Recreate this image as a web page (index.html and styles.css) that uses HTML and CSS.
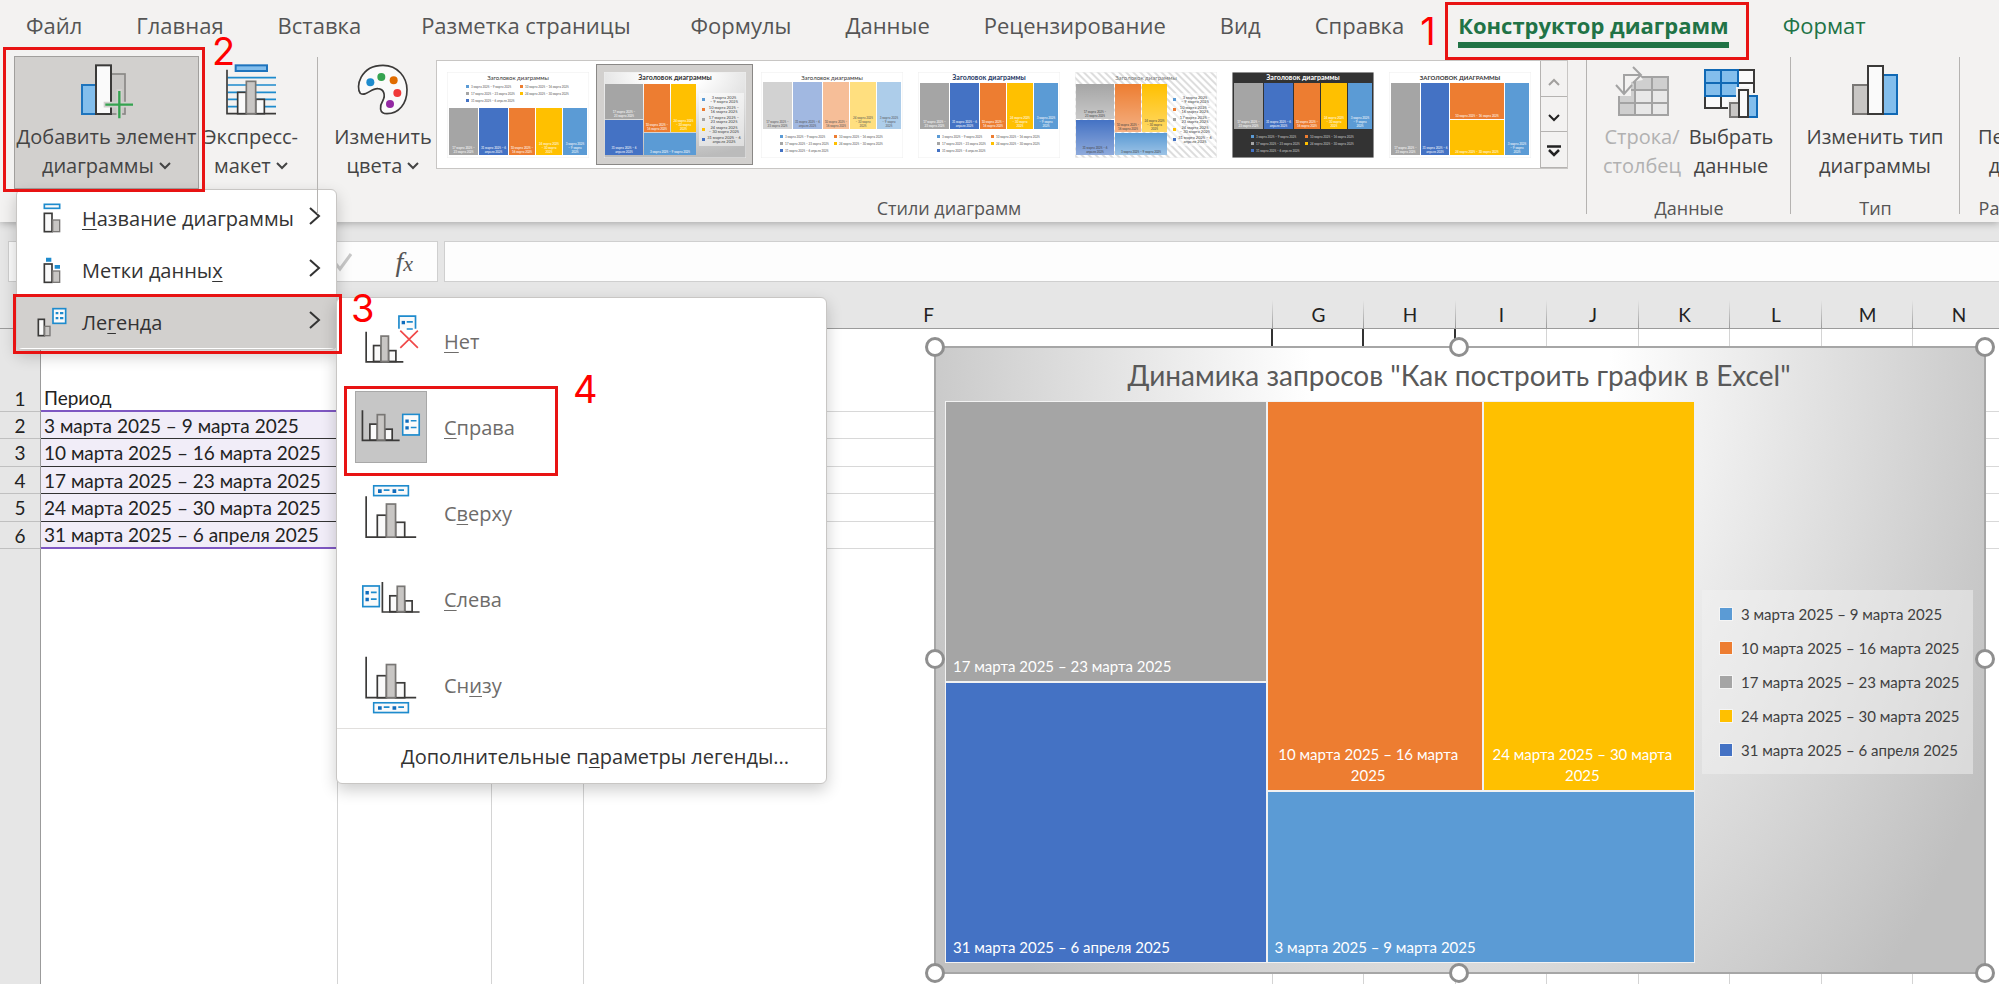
FILE: index.html
```html
<!DOCTYPE html>
<html lang="ru">
<head>
	<meta charset="utf-8">
	<title>Excel</title>
	<link rel="stylesheet" href="styles.css">
</head>
<body>
<svg class="defs">
	<symbol id="small-chart" viewBox="0 0 118 96" overflow="visible">
		<path d="M4 2V91H114" fill="none" stroke="#3b3a39" stroke-width="5"/>
		<rect x="26" y="43" width="22" height="47" fill="#fafafa" stroke="#3b3a39" stroke-width="5"/>
		<rect x="70" y="58" width="22" height="32" fill="#fafafa" stroke="#3b3a39" stroke-width="5"/>
		<rect x="48" y="15" width="22" height="75" fill="#c8c6c4" stroke="#797775" stroke-width="5"/>
	</symbol>
	<symbol id="big-chart" viewBox="0 0 156 128" overflow="visible">
		<path d="M4 2V123H152" fill="none" stroke="#3b3a39" stroke-width="5"/>
		<rect x="37" y="58" width="27" height="65" fill="#fafafa" stroke="#3b3a39" stroke-width="5"/>
		<rect x="91" y="79" width="27" height="44" fill="#fafafa" stroke="#3b3a39" stroke-width="5"/>
		<rect x="64" y="25" width="27" height="98" fill="#c8c6c4" stroke="#797775" stroke-width="5"/>
	</symbol>
	<symbol id="side-legend" viewBox="0 0 56 68">
		<rect x="3" y="3" width="49" height="61" fill="#fafafa" stroke="#1e8bcd" stroke-width="5"/>
		<path d="M11 18h10v10H11zM11 38h10v10H11z" fill="#0f6cbd"/>
		<path d="M27 22h17M27 42h17" stroke="#1e8bcd" stroke-width="5"/>
	</symbol>
	<symbol id="flat-legend" viewBox="0 0 110 36">
		<rect x="3" y="3" width="103" height="29" fill="#fafafa" stroke="#1e8bcd" stroke-width="5"/>
		<path d="M16 13h11v11H16zM59 13h11v11H59z" fill="#0f6cbd"/>
		<path d="M33 16h17M76 16h17" stroke="#1e8bcd" stroke-width="5"/>
	</symbol>
	<symbol id="chevron" viewBox="0 0 12 8">
		<path d="M1 1L6 6L11 1" fill="none" stroke="currentColor" stroke-width="2"/>
	</symbol>
	<symbol id="arrow" viewBox="0 0 12 20">
		<path d="M1 2L10 10L1 18" fill="none" stroke="currentColor" stroke-width="2"/>
	</symbol>
</svg>

<header class="ribbon">
	<nav class="tabs">
		<button class="tab">Файл</button>
		<button class="tab">Главная</button>
		<button class="tab">Вставка</button>
		<button class="tab wide">Разметка страницы</button>
		<button class="tab">Формулы</button>
		<button class="tab">Данные</button>
		<button class="tab">Рецензирование</button>
		<button class="tab">Вид</button>
		<button class="tab">Справка</button>
		<button class="tab active">Конструктор диаграмм<span class="mark mark1"></span><span class="num num1">1</span></button>
		<button class="tab green">Формат</button>
	</nav>

	<div class="groups">
		<section class="group group-layout">
			<div class="tools">
				<div class="holder">
					<button class="tool tool-add">
						<svg width="52" height="56" viewBox="248 188 156 168">
							<rect x="338" y="221" width="42" height="120" fill="#c8c6c4" stroke="#8a8886" stroke-width="5"/>
							<rect x="251" y="254" width="42" height="87" fill="#83beec" stroke="#1e74bd" stroke-width="6"/>
							<rect x="293" y="195" width="45" height="146" fill="#fafafa" stroke="#3b3a39" stroke-width="6"/>
							<path d="M363 266V356M316 313H404" stroke="#d2d0ce" stroke-width="17"/>
							<path d="M363 272V354M321 313H404" stroke="#35a350" stroke-width="7"/>
						</svg>
						<span>Добавить элемент<br>диаграммы <svg class="chev" width="12" height="8"><use href="#chevron"/></svg></span>
					</button>
					<span class="mark mark2"></span><span class="num num2">2</span>
					<div class="menu menu-main">
						<button class="item">
							<svg width="30" height="30" viewBox="110 62 90 90">
								<rect x="132" y="66" width="46" height="12" fill="#fafafa" stroke="#1e8bcd" stroke-width="5"/>
								<rect x="132" y="93" width="23" height="55" fill="#fafafa" stroke="#3b3a39" stroke-width="5"/>
								<rect x="157" y="113" width="21" height="35" fill="#c8c6c4" stroke="#797775" stroke-width="4"/>
							</svg>
							<span><u>Н</u>азвание диаграммы</span>
							<svg class="arr" width="12" height="20"><use href="#arrow"/></svg>
						</button>
						<button class="item">
							<svg width="30" height="30" viewBox="110 218 90 90">
								<path d="M137 226h16v12h-16zM163 248h16v11h-16z" fill="#1e8bcd"/>
								<rect x="132" y="245" width="23" height="55" fill="#fafafa" stroke="#3b3a39" stroke-width="5"/>
								<rect x="157" y="266" width="21" height="34" fill="#c8c6c4" stroke="#797775" stroke-width="4"/>
							</svg>
							<span>Метки данны<u>х</u></span>
							<svg class="arr" width="12" height="20"><use href="#arrow"/></svg>
						</button>
						<button class="item current">
							<svg width="30" height="30" viewBox="112 376 90 90">
								<rect x="160" y="381" width="38" height="44" fill="#fafafa" stroke="#1e8bcd" stroke-width="5"/>
								<path d="M168 391h8v7h-8zM168 406h8v7h-8zM181 391h10v7h-10zM181 406h10v7h-10z" fill="#1e8bcd"/>
								<rect x="116" y="413" width="18" height="49" fill="#fafafa" stroke="#3b3a39" stroke-width="5"/>
								<rect x="135" y="434" width="16" height="28" fill="#c8c6c4" stroke="#797775" stroke-width="4"/>
							</svg>
							<span>Ле<u>г</u>енда</span>
							<svg class="arr" width="12" height="20"><use href="#arrow"/></svg>
						</button>
						<span class="mark mark3"></span><span class="num num3">3</span>

						<div class="menu menu-sub">
							<button class="choice">
								<svg class="pic" viewBox="76 46 213 213">
									<use href="#small-chart" x="105" y="123" width="118" height="96"/>
									<path d="M206 116V79H255V116" fill="#fafafa" stroke="#1e8bcd" stroke-width="5"/>
									<path d="M214 93h10v10h-10z" fill="#0f6cbd"/>
									<path d="M229 96h18M229 117h18" stroke="#1e8bcd" stroke-width="5"/>
									<path d="M210 122L262 173M262 122L210 173" stroke="#f04848" stroke-width="5"/>
								</svg>
								<span><u>Н</u>ет</span>
							</button>
							<button class="choice">
								<svg class="pic chosen" viewBox="76 304 213 213">
									<use href="#small-chart" x="94" y="359" width="118" height="96"/>
									<use href="#side-legend" x="214" y="370" width="56" height="68"/>
								</svg>
								<span><u>С</u>права</span>
								<span class="mark mark4"></span><span class="num num4">4</span>
							</button>
							<button class="choice">
								<svg class="pic" viewBox="76 562 213 213">
									<use href="#big-chart" x="105" y="617" width="156" height="128"/>
									<use href="#flat-legend" x="128" y="585" width="110" height="36"/>
								</svg>
								<span>С<u>в</u>ерху</span>
							</button>
							<button class="choice">
								<svg class="pic" viewBox="76 820 213 213">
									<use href="#small-chart" x="153" y="874" width="118" height="96"/>
									<use href="#side-legend" x="96" y="885" width="56" height="68"/>
								</svg>
								<span><u>С</u>лева</span>
							</button>
							<button class="choice">
								<svg class="pic" viewBox="76 1078 213 213">
									<use href="#big-chart" x="105" y="1099" width="156" height="128"/>
									<use href="#flat-legend" x="128" y="1234" width="110" height="36"/>
								</svg>
								<span>Сн<u>и</u>зу</span>
							</button>
							<button class="more">Дополнительные п<u>а</u>раметры легенды...</button>
						</div>
					</div>
				</div>
				<button class="tool tool-express">
					<svg width="52" height="56" viewBox="676 188 156 168">
						<rect x="708" y="195" width="94" height="17" fill="#83beec" stroke="#1e74bd" stroke-width="6"/>
						<path d="M684 232H829M684 254H829M684 276H829M684 297H829M684 319H829" stroke="#1e8bcd" stroke-width="5"/>
						<path d="M682 208V340H829" fill="none" stroke="#3b3a39" stroke-width="5"/>
						<rect x="714" y="276" width="26" height="64" fill="#fafafa" stroke="#3b3a39" stroke-width="5"/>
						<rect x="768" y="297" width="26" height="43" fill="#fafafa" stroke="#3b3a39" stroke-width="5"/>
						<rect x="740" y="243" width="28" height="97" fill="#c8c6c4" stroke="#797775" stroke-width="5"/>
					</svg>
					<span>Экспресс-<br>макет <svg class="chev" width="12" height="8"><use href="#chevron"/></svg></span>
				</button>
			</div>
		</section>

		<section class="group group-styles">
			<div class="tools">
				<button class="tool tool-colors">
					<svg width="52" height="56" viewBox="1073 188 156 168">
						<path d="M1083 279C1068 262 1082 195 1151 195C1196 195 1223 232 1223 268C1223 310 1198 340 1163 340C1138 340 1141 316 1150 302C1160 283 1153 266 1136 265C1115 263 1100 290 1083 279Z" fill="#fafafa" stroke="#3b3a39" stroke-width="5"/>
						<circle cx="1113" cy="246" r="12" fill="#1e8bcd"/>
						<circle cx="1146" cy="230" r="12" fill="#35a350"/>
						<circle cx="1183" cy="240" r="12" fill="#e06c00"/>
						<circle cx="1194" cy="278" r="12" fill="#f03a3a"/>
						<circle cx="1172" cy="311" r="12" fill="#9329a3"/>
					</svg>
					<span>Изменить<br>цвета <svg class="chev" width="12" height="8"><use href="#chevron"/></svg></span>
				</button>
				<div class="gallery">
					<div class="thumbs" id="thumbs"></div>
					<div class="scroll">
						<button class="dim" aria-label="Вверх"><svg width="12" height="8" viewBox="0 0 12 8"><path d="M1 7L6 2L11 7" fill="none" stroke="currentColor" stroke-width="2"/></svg></button>
						<button aria-label="Вниз"><svg width="12" height="8"><use href="#chevron"/></svg></button>
						<button aria-label="Ещё"><svg width="14" height="12" viewBox="0 0 14 12"><path d="M0 1.5H14M2 5L7 10L12 5" fill="none" stroke="currentColor" stroke-width="2.5"/></svg></button>
					</div>
				</div>
			</div>
			<div class="caption">Стили диаграмм</div>
		</section>

		<section class="group group-data">
			<div class="tools">
				<button class="tool tool-row" disabled>
					<svg width="54" height="56" viewBox="0 -5 54 56">
						<rect x="4" y="9" width="49" height="38" fill="#e8e8e8"/>
						<path d="M4 9H53V22H20V47H4Z" fill="#cfcfcf"/>
						<path d="M4 9H53V47H4ZM20 9V47M37 9V47M4 22H53M4 35H53" fill="none" stroke="#a3a3a3" stroke-width="2"/>
						<path d="M0 6H24L28 12L16 14V28H0Z" fill="#f3f2f1"/>
						<path d="M9 25V7H26M18 -1L26 7L18 15M1 17L9 26L17 17" fill="none" stroke="#a3a3a3" stroke-width="2"/>
					</svg>
					<span>Строка/<br>столбец</span>
				</button>
				<button class="tool tool-select">
					<svg width="54" height="56" viewBox="0 -6 54 56">
						<rect x="1" y="1" width="49" height="38" fill="#fafafa"/>
						<rect x="1" y="1" width="33" height="26" fill="#83beec"/>
						<path d="M34 1H50V39H1V27M34 27H50M34 14H50M17 27V39" fill="none" stroke="#3b3a39" stroke-width="2"/>
						<path d="M1 1H34V27H1ZM17 1V27M1 14H34" fill="none" stroke="#1069b5" stroke-width="2"/>
						<path d="M24 31H32V18H46V24H54V50H24Z" fill="#f3f2f1"/>
						<rect x="26" y="34" width="9" height="14" fill="#c8c6c4" stroke="#797775" stroke-width="2"/>
						<rect x="44" y="27" width="9" height="21" fill="#83beec" stroke="#1069b5" stroke-width="2"/>
						<rect x="35" y="21" width="9" height="27" fill="#fafafa" stroke="#3b3a39" stroke-width="2"/>
					</svg>
					<span>Выбрать<br>данные</span>
				</button>
			</div>
			<div class="caption">Данные</div>
		</section>

		<section class="group group-type">
			<div class="tools">
				<button class="tool tool-type">
					<svg width="48" height="56" viewBox="-1 -2 48 56">
						<rect x="1" y="20" width="15" height="29" fill="#c8c6c4" stroke="#797775" stroke-width="2"/>
						<rect x="31" y="10" width="14" height="39" fill="#83beec" stroke="#1069b5" stroke-width="2"/>
						<rect x="16" y="1" width="15" height="48" fill="#fafafa" stroke="#3b3a39" stroke-width="2"/>
					</svg>
					<span>Изменить тип<br>диаграммы</span>
				</button>
			</div>
			<div class="caption">Тип</div>
		</section>

		<section class="group group-place">
			<div class="tools">
				<button class="tool tool-move">
					<svg width="48" height="56"></svg>
					<span>Переместить<br>диаграмму</span>
				</button>
			</div>
			<div class="caption">Расположение</div>
		</section>
	</div>
</header>

<div class="formula">
	<div class="fx-box">
		<svg width="18" height="22" viewBox="0 0 18 22"><path d="M1 13L5 18L16 3" fill="none" stroke="#c8c8c8" stroke-width="3"/></svg>
		<i>f<small>x</small></i>
	</div>
	<input class="fx-input" type="text" aria-label="Строка формул">
</div>

<main class="sheet">
	<table class="cells">
		<colgroup>
			<col class="c-num"><col class="c-a"><col class="c-b"><col class="c-c"><col class="c-f">
			<col class="c-n"><col class="c-n"><col class="c-n"><col class="c-n"><col class="c-n"><col class="c-n"><col class="c-n"><col class="c-n">
		</colgroup>
		<thead>
			<tr><th></th><th></th><th></th><th></th><th>F</th><th>G</th><th>H</th><th>I</th><th>J</th><th>K</th><th>L</th><th>M</th><th>N</th></tr>
		</thead>
		<tbody>
			<tr class="first"><th>1</th><td>Период</td><td></td><td></td><td class="dark"></td><td class="dark"></td><td class="dark"></td><td></td><td></td><td></td><td></td><td></td><td></td></tr>
			<tr class="sel"><th>2</th><td>3 марта 2025 – 9 марта 2025</td><td colspan="11"></td></tr>
			<tr class="sel"><th>3</th><td>10 марта 2025 – 16 марта 2025</td><td colspan="11"></td></tr>
			<tr class="sel"><th>4</th><td>17 марта 2025 – 23 марта 2025</td><td colspan="11"></td></tr>
			<tr class="sel"><th>5</th><td>24 марта 2025 – 30 марта 2025</td><td colspan="11"></td></tr>
			<tr class="sel end"><th>6</th><td>31 марта 2025 – 6 апреля 2025</td><td colspan="11"></td></tr>
			<tr class="rest"><th></th><td></td><td></td><td></td><td></td><td></td><td></td><td></td><td></td><td></td><td></td><td></td><td></td></tr>
		</tbody>
	</table>

	<div class="chart">
		<h2 class="chart-title">Динамика запросов "Как построить график в Excel"</h2>
		<div class="chart-body">
			<div class="treemap">
				<div class="tm-left">
					<div class="tile gray"><span>17 марта 2025 – 23 марта 2025</span></div>
					<div class="tile blue"><span>31 марта 2025 – 6 апреля 2025</span></div>
				</div>
				<div class="tm-right">
					<div class="tm-top">
						<div class="tile orange"><span>10 марта 2025 – 16 марта 2025</span></div>
						<div class="tile yellow"><span>24 марта 2025 – 30 марта 2025</span></div>
					</div>
					<div class="tile sky"><span>3 марта 2025 – 9 марта 2025</span></div>
				</div>
			</div>
			<ul class="legend">
				<li><i class="sky"></i>3 марта 2025 – 9 марта 2025</li>
				<li><i class="orange"></i>10 марта 2025 – 16 марта 2025</li>
				<li><i class="gray"></i>17 марта 2025 – 23 марта 2025</li>
				<li><i class="yellow"></i>24 марта 2025 – 30 марта 2025</li>
				<li><i class="blue"></i>31 марта 2025 – 6 апреля 2025</li>
			</ul>
		</div>
		<span class="dot tl"></span><span class="dot tc"></span><span class="dot tr"></span>
		<span class="dot ml"></span><span class="dot mr"></span>
		<span class="dot bl"></span><span class="dot bc"></span><span class="dot br"></span>
	</div>
</main>
<script src="thumbs.js"></script>
</body>
</html>
```

FILE: styles.css
```css
*{
	margin:0;
	padding:0;
	box-sizing:border-box;
}
body{
	height:100vh;
	display:flex;
	flex-direction:column;
	overflow:hidden;
	background:#e6e6e6;
	color:#444;
	font-family:"Open Sans","Noto Sans",sans-serif;
	font-size:20px;
}
button{
	font:inherit;
	color:inherit;
	background:none;
	border:0;
	cursor:pointer;
}
u{
	text-underline-offset:3px;
	text-decoration-thickness:1px;
}
.defs{
	position:absolute;
	width:0;
	height:0;
}

/* ribbon */
.ribbon{
	position:relative;
	z-index:5;
	background:#f3f2f1;
	box-shadow:0 1px 8px rgba(0,0,0,0.3);
}
.tabs{
	display:flex;
	gap:54px;
	height:56px;
	padding-left:26px;
	align-items:flex-start;
}
.tab{
	position:relative;
	height:48px;
	padding-top:8px;
	border-bottom:6px solid transparent;
	font-size:22px;
	line-height:34px;
	white-space:nowrap;
	color:#555;
}
.tab.wide{
	padding-left:6px;
	padding-right:6px;
}
.tab.active{
	color:#217346;
	border-color:#217346;
	font-weight:bold;
}
.tab.green{
	color:#217346;
}
.groups{
	display:flex;
	height:166px;
}
.group{
	position:relative;
	flex:none;
	display:flex;
	flex-direction:column;
	justify-content:space-between;
}
.group:not(:last-child)::after{
	content:"";
	position:absolute;
	right:0;
	top:1px;
	bottom:8px;
	width:1px;
	background:#b5b3b1;
}
.tools{
	display:flex;
	align-items:flex-start;
}
.caption{
	height:28px;
	line-height:28px;
	font-size:18px;
	text-align:center;
	color:#555;
}
.tool{
	display:flex;
	flex-direction:column;
	align-items:center;
	gap:3px;
	height:133px;
	padding-top:7px;
	line-height:29px;
	white-space:nowrap;
}
.tool:disabled{
	color:#b1b1b1;
}
.chev{
	vertical-align:3px;
}
.group-layout{
	width:318px;
	padding-left:14px;
}
.group-styles{
	flex:1;
	padding:0 19px 0 12px;
}
.group-data{
	width:204px;
	padding-left:12px;
}
.group-data .caption{
	margin-right:12px;
}
.group-type{
	width:169px;
}
.group-place{
	width:39px;
	padding-left:18px;
	overflow:hidden;
}
.group-place .caption{
	width:130px;
}
.holder{
	position:relative;
}
.tool-add{
	width:185px;
	background:#d2d0ce;
	border:1px solid #a19f9d;
	padding-top:6px;
}
.tool-express{
	width:104px;
}
.tool-colors{
	width:106px;
}
.tool-row{
	width:86px;
}
.tool-select{
	width:92px;
}
.tool-type{
	width:168px;
}
.tool-move{
	width:130px;
}

/* gallery */
.gallery{
	flex:1;
	display:flex;
	height:109px;
	margin-top:4px;
	background:#fff;
	border:1px solid #c8c6c4;
}
.thumbs{
	flex:1;
	display:flex;
	padding:3px 2px;
}
.thumb{
	flex:1;
	display:flex;
	align-items:center;
	justify-content:center;
	border:1px solid transparent;
}
.thumb.on{
	background:#d2d0ce;
	border-color:#8a8886;
}
.thumb text{
	font-family:Lato,"Open Sans",sans-serif;
	text-anchor:middle;
}
.scroll{
	display:flex;
	flex-direction:column;
	width:27px;
}
.scroll button{
	flex:1;
	border-left:1px solid #b5b3b1;
	border-bottom:1px solid #b5b3b1;
	background:#f3f2f1;
	color:#222;
}
.scroll .dim{
	color:#a19f9d;
}

/* menus */
.menu{
	position:absolute;
	background:#fff;
	border:1px solid #c8c6c4;
	border-radius:6px;
	box-shadow:0 6px 16px rgba(0,0,0,0.2);
	color:#333;
}
.menu-main{
	left:2px;
	top:133px;
	width:321px;
	padding:2px 0 1px;
}
.item{
	display:flex;
	align-items:center;
	gap:15px;
	width:100%;
	height:52px;
	padding:0 15px 0 20px;
	text-align:left;
}
.item span{
	flex:1;
	white-space:nowrap;
}
.arr{
	flex:none;
	margin-bottom:4px;
}
.item.current{
	background:#d2d0ce;
}
.menu-sub{
	left:319px;
	top:107px;
	width:491px;
}
.choice{
	position:relative;
	display:flex;
	align-items:center;
	gap:17px;
	width:100%;
	height:86px;
	padding-left:18px;
	color:#6e6c6a;
	text-align:left;
}
.pic{
	width:72px;
	height:72px;
}
.pic.chosen{
	background:#c6c6c6;
	outline:1px solid #a8a8a8;
	outline-offset:-1px;
}
.more{
	width:100%;
	height:55px;
	padding-left:64px;
	border-top:1px solid #e1dfdd;
	text-align:left;
}

/* red callouts */
.mark{
	position:absolute;
	border:3px solid #e81313;
	pointer-events:none;
	z-index:3;
}
.num{
	position:absolute;
	color:#f00;
	font:38px/38px Inter,sans-serif;
	z-index:3;
}
.mark1{
	left:-13px;
	right:-20px;
	top:2px;
	bottom:-18px;
}
.num1{
	left:-38px;
	top:12px;
}
.mark2{
	left:-11px;
	top:-9px;
	width:202px;
	height:145px;
}
.num2{
	left:198px;
	top:-24px;
}
.mark3{
	left:-4px;
	top:104px;
	width:329px;
	height:60px;
}
.num3{
	left:334px;
	top:99px;
}
.mark4{
	left:7px;
	top:2px;
	width:214px;
	height:90px;
}
.num4{
	left:236px;
	top:-14px;
}

/* formula bar */
.formula{
	display:flex;
	gap:6px;
	padding:19px 0 0 8px;
}
.fx-box{
	display:flex;
	align-items:center;
	justify-content:flex-end;
	gap:42px;
	width:430px;
	height:41px;
	padding-right:24px;
	background:#fdfdfd;
	border:1px solid #cfcfcf;
	color:#555;
	font-family:"Liberation Serif",serif;
	font-size:28px;
}
.fx-box small{
	font-size:22px;
}
.fx-input{
	flex:1;
	height:41px;
	background:#fdfdfd;
	border:1px solid #cfcfcf;
	border-right:0;
}

/* sheet */
.sheet{
	position:relative;
	flex:1;
	overflow:hidden;
	background:#fff;
	font-family:Lato,"Open Sans",sans-serif;
	color:#222;
}
.cells{
	table-layout:fixed;
	border-collapse:separate;
	border-spacing:0;
	width:2005px;
	font-size:19px;
}
.c-num{
	width:41px;
}
.c-a{
	width:297px;
}
.c-b{
	width:154px;
}
.c-c{
	width:92px;
}
.c-f{
	width:689px;
}
.c-n{
	width:92px;
}
.c-n:nth-child(even){
	width:91px;
}
.cells th{
	background:#e6e6e6;
	font-weight:normal;
	border-right:1px solid #9b9b9b;
	border-bottom:1px solid #c0c0c0;
}
.cells thead th{
	height:47px;
	padding-top:20px;
	line-height:26px;
	border-right:0;
	border-bottom:1px solid #9b9b9b;
	background:linear-gradient(#e6e6e6,#9b9b9b) right bottom/1px 28px no-repeat #e6e6e6;
}
.cells td{
	padding-left:3px;
	border-bottom:1px solid #d8d8d8;
	white-space:nowrap;
}
.cells tr.first > *{
	height:83px;
	vertical-align:bottom;
	line-height:25px;
}
.cells .first td{
	border-right:1px solid #d4d4d4;
}
.cells .first td.dark{
	border-right:2px solid #333;
}
.cells .first td:nth-child(2){
	border-bottom:2px solid #7e57c2;
}
.cells .sel > *{
	height:27px;
	line-height:25px;
}
.cells .sel:nth-child(odd) > *{
	height:28px;
}
.cells .sel td:nth-child(2){
	background:#f1edf8;
	border-bottom:1px solid #333;
}
.cells .end td:nth-child(2){
	border-bottom:2px solid #7e57c2;
}
.cells .rest > *{
	height:440px;
	border-bottom:0;
}
.cells .rest td{
	border-right:1px solid #d4d4d4;
}

/* chart object */
.chart{
	position:absolute;
	left:934px;
	top:64px;
	width:1052px;
	height:628px;
	display:flex;
	flex-direction:column;
	padding:0 11px 9px 9px;
	border:2px solid #a6a6a6;
	background:radial-gradient(ellipse 57% 143% at 50% 0,#fff 25%,#c0c0c0);
}
.chart-title{
	height:53px;
	line-height:54px;
	font-size:28px;
	font-weight:normal;
	text-align:center;
	color:#595959;
}
.chart-body{
	flex:1;
	display:flex;
	align-items:center;
	gap:7px;
}
.treemap{
	align-self:stretch;
	flex:1;
	display:grid;
	grid-template-columns:320fr 427fr;
	gap:2px;
	padding:1px;
	background:#f2f2f2;
}
.tm-left{
	display:grid;
	grid-template-rows:1fr 1fr;
	gap:2px;
}
.tm-right{
	display:grid;
	grid-template-rows:389fr 171fr;
	gap:2px;
}
.tm-top{
	display:grid;
	grid-template-columns:215fr 211fr;
	gap:2px;
}
.tile{
	display:flex;
	align-items:flex-end;
	padding:0 20px 4px 7px;
	color:#fff;
	font-size:15px;
	line-height:21px;
	text-align:center;
}
.gray{
	background:#a5a5a5;
}
.blue{
	background:#4472c4;
}
.orange{
	background:#ed7d31;
}
.yellow{
	background:#ffc000;
}
.sky{
	background:#5b9bd5;
}
.legend{
	width:271px;
	padding:7px 0 7px 17px;
	list-style:none;
	background:rgba(242,242,242,0.5);
	font-size:15px;
	color:#404040;
}
.legend li{
	display:flex;
	align-items:center;
	gap:8px;
	height:34px;
	white-space:nowrap;
}
.legend i{
	width:14px;
	height:14px;
	border:1px solid #f5f5f5;
}
.dot{
	position:absolute;
	width:20px;
	height:20px;
	margin:-11px;
	border:3px solid #8f8f8f;
	border-radius:50%;
	background:#fff;
}
.tl,.ml,.bl{
	left:0;
}
.tc,.bc{
	left:50%;
}
.tr,.mr,.br{
	left:100%;
	margin-left:-9px;
}
.tl,.tc,.tr{
	top:0;
}
.ml,.mr{
	top:50%;
}
.bl,.bc,.br{
	top:100%;
	margin-top:-9px;
}
```

FILE: thumbs.js
```js
var GRAY='#a5a5a5', BLUE='#4472c4', ORANGE='#ed7d31', YELLOW='#ffc000', SKY='#5b9bd5';
var names = {};
names[GRAY] = ['17 марта 2025 –','23 марта 2025'];
names[BLUE] = ['31 марта 2025 – 6','апреля 2025'];
names[ORANGE] = ['10 марта 2025 –','16 марта 2025'];
names[YELLOW] = ['24 марта 2025','– 30 марта','2025'];
names[SKY] = ['3 марта 2025','– 9 марта','2025'];

// five columns side by side
function columns(y,h){
	return [[2,y,29,h,GRAY],[32,y,29,h,BLUE],[62,y,26,h,ORANGE],[89,y,26,h,YELLOW],[116,y,24,h,SKY]];
}
// two left, two top, one bottom
function mosaic(){
	return [[1,12,38,35,GRAY],[1,48,38,35,BLUE],[40,12,26,48,ORANGE],[67,12,25,48,YELLOW],[40,61,52,22,SKY]];
}
var styles = [
	{tiles:columns(36,47), legend:14},
	{tiles:mosaic(), side:true, bg:'url(#tg)', bold:true, on:true},
	{tiles:columns(10,47), legend:64, fade:0.5, ink:'#555'},
	{tiles:columns(11,46), legend:64, bold:true, head:'#1f3864'},
	{tiles:mosaic(), side:true, bg:'url(#th)', head:'#777', shade:true, ink:'#444'},
	{tiles:columns(11,46), legend:64, bg:'#333', bold:true, head:'#fff', note:'#ccc'},
	{tiles:[[2,11,29,72,GRAY],[32,11,28,72,BLUE],[61,11,54,36,ORANGE],[61,48,54,35,YELLOW],[116,11,24,72,SKY]], bold:true, title:'ЗАГОЛОВОК ДИАГРАММЫ'}
];

function text(x,y,size,fill,str,extra){
	return '<text x="'+x+'" y="'+y+'" font-size="'+size+'" fill="'+fill+'" '+(extra||'')+'>'+str+'</text>';
}
function draw(s){
	var out = '<svg width="142" height="86" viewBox="0 0 142 86">';
	out += '<rect x="0" y="0" width="142" height="86" fill="'+(s.bg||'#fff')+'" stroke="#eee"/>';
	out += text(71,8,(s.bold && !s.title)?7:6,s.head||'#333',s.title||'Заголовок диаграммы',s.bold?'font-weight="bold"':'');
	for(var i=0;i<s.tiles.length;i++){
		var t = s.tiles[i];
		out += '<rect x="'+t[0]+'" y="'+t[1]+'" width="'+t[2]+'" height="'+t[3]+'" fill="'+t[4]+'" opacity="'+(s.fade||1)+'"/>';
		if(s.shade){
			out += '<rect x="'+t[0]+'" y="'+t[1]+'" width="'+t[2]+'" height="'+t[3]+'" fill="url(#ts)"/>';
		}
		var lines = names[t[4]];
		if(t[2]>50){
			lines = [lines.join(' ')];
		}
		for(var k=0;k<lines.length;k++){
			out += text(t[0]+t[2]/2, t[1]+t[3]-2-(lines.length-1-k)*4, 3, s.ink||'#fff', lines[k]);
		}
	}
	if(s.legend){
		var order = [SKY,ORANGE,GRAY,YELLOW,BLUE];
		for(var n=0;n<5;n++){
			var x = n%2 ? 73 : 19, y = s.legend+Math.floor(n/2)*7;
			out += '<rect x="'+x+'" y="'+(y-1)+'" width="3" height="3" fill="'+order[n]+'"/>';
			out += text(x+5, y+2, 3, s.note||'#555', names[order[n]].join(' '), 'style="text-anchor:start"');
		}
	}
	if(s.side){
		var side = [SKY,ORANGE,GRAY,YELLOW,BLUE];
		out += '<rect x="95" y="21" width="45" height="53" fill="#fff" opacity="0.5"/>';
		for(var m=0;m<5;m++){
			out += '<rect x="98" y="'+(26+m*10)+'" width="3" height="3" fill="'+side[m]+'"/>';
			out += text(120, 27+m*10, 4, '#444', names[side[m]][0]);
			out += text(120, 31+m*10, 4, '#444', names[side[m]].slice(1).join(' '));
		}
	}
	return out+'</svg>';
}

var box = document.getElementById('thumbs');
var html = '<svg class="defs"><defs>'
	+ '<radialGradient id="tg" cx="0.5" cy="0" r="1"><stop offset="0.2" stop-color="#fff"/><stop offset="1" stop-color="#bbb"/></radialGradient>'
	+ '<linearGradient id="ts" x1="0" y1="0" x2="0" y2="1"><stop offset="0" stop-color="#fff" stop-opacity="0"/><stop offset="1" stop-color="#fff" stop-opacity="0.4"/></linearGradient>'
	+ '<pattern id="th" width="5" height="5" patternUnits="userSpaceOnUse" patternTransform="rotate(-45)"><rect width="5" height="5" fill="#fff"/><rect width="2" height="5" fill="#ddd"/></pattern>'
	+ '</defs></svg>';
for(var i=0;i<styles.length;i++){
	html += '<div class="thumb'+(styles[i].on?' on':'')+'">'+draw(styles[i])+'</div>';
}
box.innerHTML = html;
```
